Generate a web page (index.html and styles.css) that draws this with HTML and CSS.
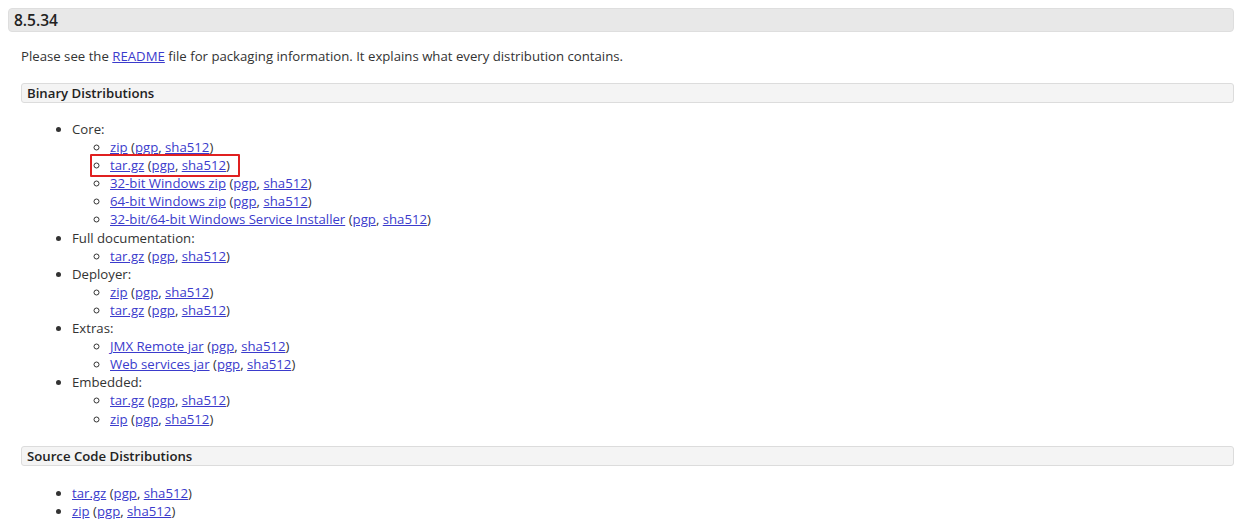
FILE: index.html
```html
<!DOCTYPE html>
<html>
<head>
<meta charset="utf-8">
<link rel="stylesheet" href="styles.css">
</head>
<body>
<h3 class="version">8.5.34</h3>
<div class="section">
  <p class="intro">Please see the <a href="#">README</a> file for packaging information. It explains what every distribution contains.</p>

  <h4 class="subhead">Binary Distributions</h4>
  <ul class="list">
    <li>Core:
      <ul class="sub">
        <li><a href="#">zip</a> (<a href="#">pgp</a>, <a href="#">sha512</a>)</li>
        <li><span class="marked"><a href="#">tar.gz</a> (<a href="#">pgp</a>, <a href="#">sha512</a>)</span></li>
        <li><a href="#">32-bit Windows zip</a> (<a href="#">pgp</a>, <a href="#">sha512</a>)</li>
        <li><a href="#">64-bit Windows zip</a> (<a href="#">pgp</a>, <a href="#">sha512</a>)</li>
        <li><a href="#">32-bit/64-bit Windows Service Installer</a> (<a href="#">pgp</a>, <a href="#">sha512</a>)</li>
      </ul>
    </li>
    <li>Full documentation:
      <ul class="sub">
        <li><a href="#">tar.gz</a> (<a href="#">pgp</a>, <a href="#">sha512</a>)</li>
      </ul>
    </li>
    <li>Deployer:
      <ul class="sub">
        <li><a href="#">zip</a> (<a href="#">pgp</a>, <a href="#">sha512</a>)</li>
        <li><a href="#">tar.gz</a> (<a href="#">pgp</a>, <a href="#">sha512</a>)</li>
      </ul>
    </li>
    <li>Extras:
      <ul class="sub">
        <li><a href="#">JMX Remote jar</a> (<a href="#">pgp</a>, <a href="#">sha512</a>)</li>
        <li><a href="#">Web services jar</a> (<a href="#">pgp</a>, <a href="#">sha512</a>)</li>
      </ul>
    </li>
    <li>Embedded:
      <ul class="sub">
        <li><a href="#">tar.gz</a> (<a href="#">pgp</a>, <a href="#">sha512</a>)</li>
        <li><a href="#">zip</a> (<a href="#">pgp</a>, <a href="#">sha512</a>)</li>
      </ul>
    </li>
  </ul>

  <h4 class="subhead">Source Code Distributions</h4>
  <ul class="list src">
    <li><a href="#">tar.gz</a> (<a href="#">pgp</a>, <a href="#">sha512</a>)</li>
    <li><a href="#">zip</a> (<a href="#">pgp</a>, <a href="#">sha512</a>)</li>
  </ul>
</div>
</body>
</html>
```

FILE: styles.css
```css
html, body {
  background: #ffffff;
}
body {
  margin: 8px 6px 8px 8px;
  font-family: "Open Sans", "Noto Sans", sans-serif;
  font-size: 13.2px;
  line-height: 18px;
  color: #333333;
}
a {
  color: #3b3bcc;
  text-decoration: underline;
}
.version {
  margin: 0;
  height: 24px;
  box-sizing: border-box;
  padding: 0 5px;
  font-size: 15.5px;
  line-height: 22px;
  font-weight: 600;
  color: #222222;
  background: #e8e8e8;
  border: 1px solid #dedede;
  border-radius: 4px;
}
.section {
  padding-left: 13px;
}
.intro {
  margin: 15px 0 18px;
}
.subhead {
  margin: 0;
  height: 20px;
  box-sizing: border-box;
  padding: 0 5px;
  font-size: 13.2px;
  line-height: 18px;
  font-weight: 600;
  color: #222222;
  background: #f4f4f4;
  border: 1px solid #dcdcdc;
  border-radius: 3px;
}
.list {
  margin: 17px 0 18px;
  padding-left: 51px;
  list-style: disc;
}
.list.src {
  margin-top: 18px;
}
.list li {
  line-height: 18.1px;
}
.sub {
  margin: 0;
  padding-left: 38px;
  list-style: circle;
}
.marked {
  position: relative;
}
.marked::after {
  content: "";
  position: absolute;
  left: -20px;
  right: -10px;
  top: -2px;
  bottom: -3px;
  border: 2px solid #e02020;
  border-radius: 1px;
}
```
